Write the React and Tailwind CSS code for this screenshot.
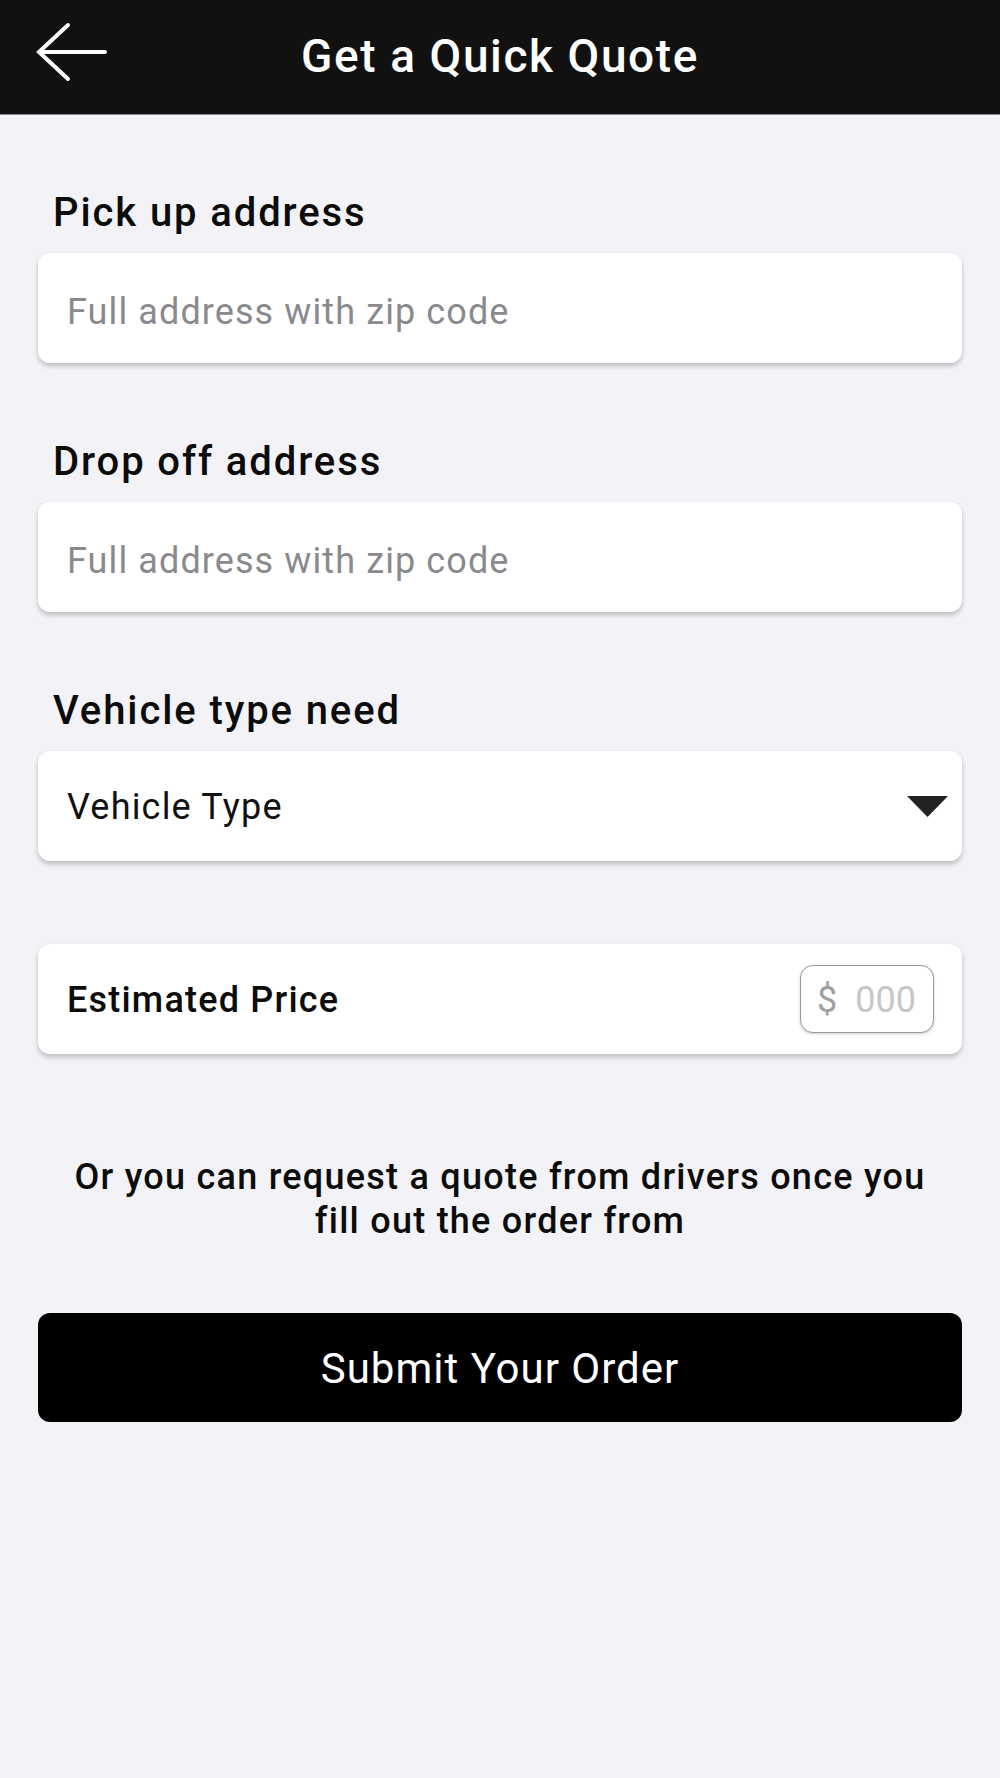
import React from "react";

const font = { fontFamily: "Roboto, 'Noto Sans', Arial, sans-serif" };

function Label({ children, className = "" }) {
  return (
    <div className={"pl-[15px] text-[40px] leading-[44px] font-medium tracking-[1.9px] text-[#0c0c0c] " + className}>
      {children}
    </div>
  );
}

function Box({ children, className = "" }) {
  return (
    <div
      className={
        "h-[110px] rounded-[12px] bg-white shadow-[0_3px_5px_rgba(0,0,0,0.22)] flex items-center " +
        className
      }
    >
      {children}
    </div>
  );
}

export default function App() {
  return (
    <div className="min-h-[1778px] w-full bg-[#f2f2f7]" style={font}>
      <header className="h-[115px] bg-[#111111] border-b border-[#8c8c8c] grid grid-cols-[1fr_auto_1fr] items-center">
        <div className="pl-[36px] flex items-center -mt-[10px]">
          <svg width="72" height="60" viewBox="0 0 72 60" fill="none">
            <path
              d="M32 3 L3 30 L32 57 M3 30 L69 30"
              stroke="white"
              strokeWidth="4"
              strokeLinecap="round"
              strokeLinejoin="miter"
            />
          </svg>
        </div>
        <h1 className="text-[46px] font-medium tracking-[1.6px] text-white leading-none pb-[3px]">Get a Quick Quote</h1>
        <div />
      </header>

      <main className="px-[38px]">
        <Label className="pt-[76px]">Pick up address</Label>
        <Box className="mt-[18px] px-[29px] pt-[7px]">
          <span className="text-[36px] tracking-[1.1px] text-[#8a8a8e]">Full address with zip code</span>
        </Box>

        <Label className="pt-[77px]">Drop off address</Label>
        <Box className="mt-[18px] px-[29px] pt-[7px]">
          <span className="text-[36px] tracking-[1.1px] text-[#8a8a8e]">Full address with zip code</span>
        </Box>

        <Label className="pt-[77px]">Vehicle type need</Label>
        <Box className="mt-[18px] pl-[29px] pr-[14px] pt-[2px] justify-between">
          <span className="text-[36px] tracking-[1.2px] text-[#111]">Vehicle Type</span>
          <svg width="41" height="21" viewBox="0 0 41 21" className="-mt-[2px]">
            <polygon points="0,0 41,0 20.5,21" fill="#222" />
          </svg>
        </Box>

        <Box className="mt-[83px] pl-[29px] pr-[28px] justify-between">
          <span className="text-[36px] font-medium tracking-[1.2px] text-[#0c0c0c] pt-[2px]">Estimated Price</span>
          <div className="w-[134px] h-[68px] rounded-[13px] border-[1.5px] border-[#9a9a9a] bg-white shadow-[0_1px_3px_rgba(0,0,0,0.2)] flex items-center pl-[16px] text-[36px] pt-[2px]">
            <span className="text-[#a0a0a0]">$</span>
            <span className="ml-[18px] text-[#c7c7c7]">000</span>
          </div>
        </Box>

        <p className="mt-[101px] text-center text-[36px] leading-[44px] font-medium tracking-[1.25px] text-[#0c0c0c]">
          Or you can request a quote from drivers once you
          <br />
          fill out the order from
        </p>

        <button className="mt-[70px] w-full h-[109px] rounded-[12px] bg-black text-white text-[42px] tracking-[1px] flex items-center justify-center pt-[1px]">
          Submit Your Order
        </button>
      </main>
    </div>
  );
}
